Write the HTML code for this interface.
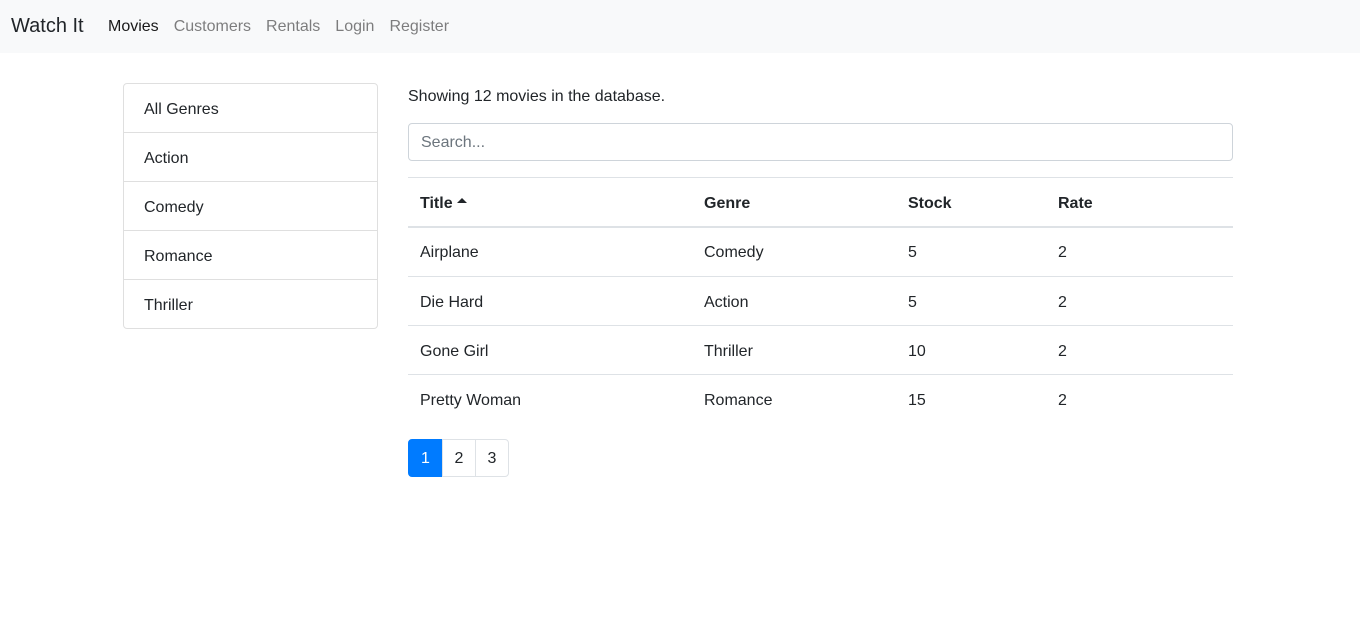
<!DOCTYPE html>
<html><head><meta charset="utf-8"><style>
*{box-sizing:border-box;margin:0;padding:0}
body{font-family:"Liberation Sans",sans-serif;font-size:16px;color:#212529;background:#fff;width:1360px;height:620px;overflow:hidden}
.nav{height:53px;background:#f8f9fa;position:relative}
.brand{position:absolute;left:11px;top:15px;font-size:20px;color:#212529}
.links{position:absolute;left:108px;top:18px;display:flex}
.links span{margin-right:15px;color:rgba(0,0,0,.5)}
.links span.a{color:rgba(0,0,0,.9)}
.lg{position:absolute;left:123px;top:83px;width:255px;border:1px solid rgba(0,0,0,.125);border-radius:4px}
.lg div{height:49px;padding:17px 20px 0;border-top:1px solid rgba(0,0,0,.125)}
.lg div:first-child{border-top:none;height:48px;padding-top:17px}
.main{position:absolute;left:408px;top:85px;width:825px}
.t{line-height:24px}
.inp{margin-top:14px;height:38px;border:1px solid #ced4da;border-radius:4px;padding:10px 12px;color:#6c757d}
.r{display:flex;height:49px;border-top:1px solid #dee2e6;align-items:center;padding-top:3px}
.r.h{height:51px;border-bottom:2px solid #dee2e6;font-weight:bold;margin-top:16px;padding-top:3px}
.r.h+.r{border-top:none;height:48px;padding-top:2px}
.r span{padding-left:12px}
.c1{width:284px}.c2{width:204px}.c3{width:150px}
.pg{margin-top:16px;display:flex}
.pg div{width:34px;height:38px;border:1px solid #dee2e6;margin-left:-1px;text-align:center;line-height:37px}
.pg div.a{background:#007bff;border-color:#007bff;color:#fff;margin-left:0;border-radius:4px 0 0 4px;width:35px}
.pg div:last-child{border-radius:0 4px 4px 0}
</style></head><body>
<div class="nav"><div class="brand">Watch It</div>
<div class="links"><span class="a">Movies</span><span>Customers</span><span>Rentals</span><span>Login</span><span>Register</span></div></div>
<div class="lg"><div>All Genres</div><div>Action</div><div>Comedy</div><div>Romance</div><div>Thriller</div></div>
<div class="main">
<div class="t">Showing 12 movies in the database.</div>
<div class="inp">Search...</div>
<div class="r h"><span class="c1">Title <svg width="10" height="8" viewBox="0 0 10 8" style="vertical-align:3px"><path d="M0 6L5 1L10 6Z" fill="#212529"/></svg></span><span class="c2">Genre</span><span class="c3">Stock</span><span>Rate</span></div>
<div class="r"><span class="c1">Airplane</span><span class="c2">Comedy</span><span class="c3">5</span><span>2</span></div>
<div class="r"><span class="c1">Die Hard</span><span class="c2">Action</span><span class="c3">5</span><span>2</span></div>
<div class="r"><span class="c1">Gone Girl</span><span class="c2">Thriller</span><span class="c3">10</span><span>2</span></div>
<div class="r"><span class="c1">Pretty Woman</span><span class="c2">Romance</span><span class="c3">15</span><span>2</span></div>
<div class="pg"><div class="a">1</div><div>2</div><div>3</div></div>
</div>
</body></html>
